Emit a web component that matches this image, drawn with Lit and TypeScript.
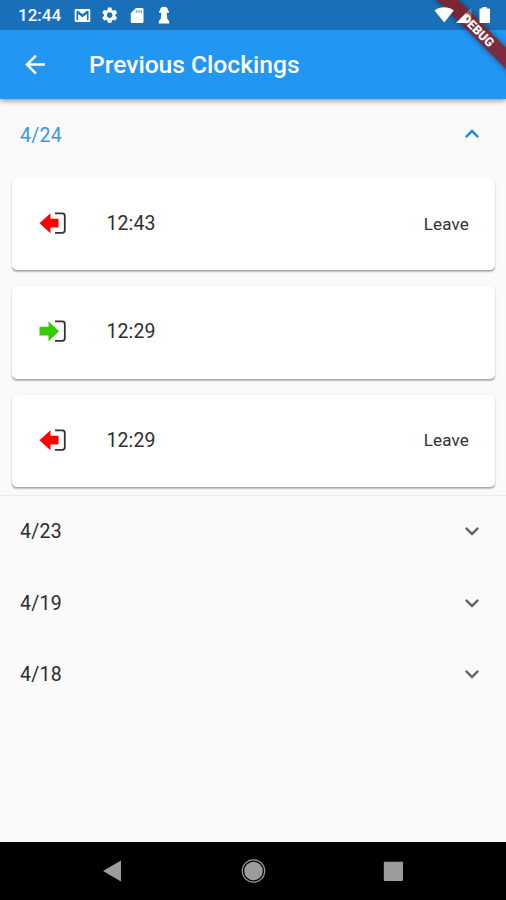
import { LitElement, html, css, svg } from "lit";
import { customElement, property, state } from "lit/decorators.js";
import { classMap } from "lit/directives/class-map.js";

type Direction = "in" | "out";
interface Clocking { time: string; direction: Direction; note: string; }
interface Day { date: string; clockings: Clocking[]; }

// System icons are painted above the app surface, so the bar itself stays transparent.
@customElement("status-bar")
class StatusBar extends LitElement {
  static styles = css`
    :host { display: flex; flex: none; height: 30px; color: #fff; align-items: center; z-index: 3; }
    .clock { width: 56px; padding-left: 18px; font-size: 17px; font-weight: 500; line-height: 30px; }
    svg { display: block; fill: #fff; flex: none; }
    .right { margin-left: auto; }
  `;
  render() {
    return html`
      <span class="clock">12:44</span>
      <svg width="110" height="30" viewBox="74 0 110 30">
        <path fill-rule="evenodd" d="M76 9h13a1.3 1.3 0 0 1 1.3 1.3v10.4a1.3 1.3 0 0 1-1.3 1.3H76a1.3 1.3 0 0 1-1.3-1.3V10.3a1.3 1.3 0 0 1 1.3-1.3zM76.500 10.700v9.600h1.600v-6.300l4.400 3.200 4.400-3.200v6.300h1.600v-9.600h-1.400l-4.600 3.500-4.600-3.500z"/>
        <g transform="translate(100.2 5.7) scale(.79)">
          <path d="M19.140 12.940c.04-.3.060-.61.060-.94 0-.32-.02-.64-.07-.94l2.030-1.580c.18-.14.230-.41.120-.61l-1.920-3.320c-.12-.22-.37-.29-.59-.22l-2.390.96c-.5-.38-1.030-.7-1.620-.94l-.36-2.540c-.04-.24-.24-.41-.48-.41h-3.840c-.24 0-.43.17-.47.41l-.36 2.540c-.59.24-1.130.57-1.620.94l-2.390-.96c-.22-.08-.47 0-.59.22L2.740 8.870c-.12.21-.08.47.12.61l2.030 1.580c-.05.3-.09.63-.09.940s.02.640.07.940l-2.030 1.580c-.18.140-.23.410-.12.610l1.920 3.320c.12.220.37.290.59.220l2.390-.96c.5.380 1.030.700 1.620.940l.36 2.540c.05.240.24.410.48.410h3.840c.24 0 .44-.17.470-.41l.36-2.540c.59-.24 1.130-.56 1.620-.94l2.390.96c.22.080.47 0 .59-.22l1.920-3.320c.12-.22.07-.47-.12-.61l-2.010-1.580zM12 15.600c-1.980 0-3.600-1.620-3.600-3.600s1.620-3.600 3.600-3.600 3.600 1.620 3.600 3.600-1.620 3.600-3.600 3.600z"/>
        </g>
        <path fill-rule="evenodd" d="M136 8h6.200a1.300 1.300 0 0 1 1.300 1.300v12.400a1.300 1.300 0 0 1-1.300 1.300h-10.100a1.300 1.300 0 0 1-1.300-1.300V13zM136.400 10.200v2.600h.9v-2.600zM138.600 10.200v2.600h.9v-2.600zM140.800 10.200v2.600h.9v-2.600z"/>
        <path d="M164 6.700a4 4 0 0 1 4 4h.9v2h-2.200l.6 6.300c1.400.8 2 2 2 4.500h-10.600c0-2.500.6-3.700 2-4.500l.6-6.300h-2.200v-2h.9a4 4 0 0 1 4-4z"/>
      </svg>
      <svg class="right" width="76" height="30" viewBox="430 0 76 30">
        <path d="M444.200 22.500 434.600 10.400c5.500-4.300 13.700-4.300 19.200 0z"/>
        <path fill-opacity=".25" d="M471.500 7.500V23h-15.500z"/>
        <path d="M466.300 12.700V23h-10.300z"/>
        <path d="M482.300 7h4.500v1.500h2.200c.7 0 1 .3 1 1v12.500c0 .7-.3 1-1 1h-8.500c-.7 0-1-.3-1-1V9.500c0-.7.300-1 1-1h1.800z"/>
      </svg>`;
  }
}

@customElement("title-bar")
class TitleBar extends LitElement {
  static styles = css`
    :host { display: flex; flex: none; align-items: center; height: 69px; background: #2196f3; color: #fff;
      box-shadow: 0 2px 5px rgba(0,0,0,.4); clip-path: inset(0 0 -12px 0); z-index: 1; }
    svg { display: block; margin-left: 20px; width: 69px; height: 30px; fill: #fff; }
    h1 { margin: 0; padding-top: 1px; font-size: 24.6px; font-weight: 500; line-height: 30px; white-space: nowrap; }
  `;
  @property() heading = "";
  render() {
    return html`
      <svg viewBox="0 0 69 30"><path transform="translate(.3 -.2) scale(1.23)" d="M20 11H7.830l5.590-5.590L12 4l-8 8 8 8 1.410-1.410L7.830 13H20v-2z"/></svg>
      <h1>${this.heading}</h1>`;
  }
}

@customElement("clocking-card")
class ClockingCard extends LitElement {
  static styles = css`
    :host { display: flex; align-items: center; box-sizing: border-box; height: 92.3px; padding: 0 26px 1px 27px;
      background: #fff; border-radius: 5px; color: #303030;
      box-shadow: 0 2px 1.5px -.5px rgba(0,0,0,.2), 0 1px 1px rgba(0,0,0,.12), 0 1px 3px rgba(0,0,0,.1); }
    svg { display: block; width: 30px; height: 26px; margin-bottom: 1px; flex: none; }
    .in { fill: #33cc05; }
    .out { fill: #fe0000; }
    .frame { fill: none; stroke: #333; stroke-width: 1.8; }
    .time { margin-left: 37.5px; font-size: 19.5px; letter-spacing: .1px; }
    .note { margin-left: auto; font-size: 17px; letter-spacing: .15px; }
  `;
  @property({ attribute: false }) clocking!: Clocking;
  render() {
    const { direction, time, note } = this.clocking;
    const arrow = direction === "in"
      ? svg`<path class="in" d="M.5 8.800h9V3.200l10.500 10-10.500 10v-5.600h-9z"/>`
      : svg`<path class="out" d="M.5 13.200 11.500 3.200v5.600h8v8.800h-8v5.600z"/>`;
    return html`
      <svg viewBox="0 0 30 26">
        <path class="frame" d="M16 3.400h7.300q2.500 0 2.500 2.500v14.400q0 2.500-2.500 2.500H16"/>
        ${arrow}
      </svg>
      <span class="time">${time}</span>
      <span class="note">${note}</span>`;
  }
}

@customElement("day-section")
class DaySection extends LitElement {
  static styles = css`
    :host { display: block; color: #2b2b2b; }
    .header { display: flex; align-items: center; justify-content: space-between; box-sizing: border-box;
      height: 71.5px; padding: 0 20px 1px; font-size: 19.5px; letter-spacing: .3px; cursor: pointer; }
    .header.open { color: #3b95e8; padding-bottom: 0; }
    .header.open span { padding-top: 1px; }
    svg { display: block; width: 28px; height: 28px; margin-bottom: 1px; fill: #666; }
    .open svg { fill: #1e88e5; transform: rotate(180deg); }
    .cards { display: grid; gap: 16px; padding: 7.500px 11px 8.500px 12px; border-bottom: 1.500px solid #ebebeb; }
  `;
  @property({ attribute: false }) day!: Day;
  @state() private expanded = false;
  willUpdate(changed: Map<string, unknown>) {
    if (changed.has("day")) this.expanded = this.day.clockings.length > 0;
  }
  render() {
    return html`
      <div class=${classMap({ header: true, open: this.expanded })} @click=${() => (this.expanded = !this.expanded)}>
        <span>${this.day.date}</span>
        <svg viewBox="0 0 24 24"><path d="M16.590 8.590 12 13.170 7.410 8.590 6 10l6 6 6-6z"/></svg>
      </div>
      ${this.expanded && this.day.clockings.length
        ? html`<div class="cards">${this.day.clockings.map(c => html`<clocking-card .clocking=${c}></clocking-card>`)}</div>`
        : null}`;
  }
}

@customElement("nav-bar")
class NavBar extends LitElement {
  static styles = css`
    :host { display: flex; flex: none; justify-content: space-around; align-items: center; height: 58px;
      box-sizing: border-box; padding: 0 43px; background: #000; }
    svg { display: block; width: 26px; height: 26px; fill: #9c9c9c; }
    .ring { fill: none; stroke: #9c9c9c; stroke-width: 1.2; }
  `;
  render() {
    return html`
      <svg viewBox="0 0 26 26"><path d="M3 13 21 2.600v20.800z"/></svg>
      <svg viewBox="0 0 26 26"><circle cx="13.500" cy="13" r="9.300"/><circle class="ring" cx="13.500" cy="13" r="11.200"/></svg>
      <svg viewBox="0 0 26 26"><rect x="3.800" y="3.700" width="19.200" height="19.200" rx="1"/></svg>`;
  }
}

@customElement("app-root")
class AppRoot extends LitElement {
  static styles = css`
    :host { display: flex; flex-direction: column; position: relative; height: 900px; overflow: hidden;
      background: linear-gradient(#1a70b8 30px, #fafafa 30px); font-family: Roboto, "Liberation Sans", sans-serif; }
    main { flex: 1; min-height: 0; }
    .banner { position: absolute; top: 22.7px; right: -47px; width: 150px; height: 15.2px; transform: rotate(45deg);
      background: linear-gradient(rgba(183,28,28,.63), rgba(183,28,28,.63)), rgba(0,0,0,.5);
      box-shadow: 0 0 6px rgba(0,0,0,.45); color: #fff; z-index: 2;
      font-size: 12.5px; line-height: 15.5px; font-weight: 900; text-align: center; }
  `;
  private days: Day[] = [
    { date: "4/24", clockings: [
      { time: "12:43", direction: "out", note: "Leave" },
      { time: "12:29", direction: "in", note: "" },
      { time: "12:29", direction: "out", note: "Leave" },
    ] },
    { date: "4/23", clockings: [] },
    { date: "4/19", clockings: [] },
    { date: "4/18", clockings: [] },
  ];
  render() {
    return html`
      <status-bar></status-bar>
      <title-bar heading="Previous Clockings"></title-bar>
      <main>${this.days.map(d => html`<day-section .day=${d}></day-section>`)}</main>
      <nav-bar></nav-bar>
      <div class="banner">DEBUG</div>`;
  }
}
